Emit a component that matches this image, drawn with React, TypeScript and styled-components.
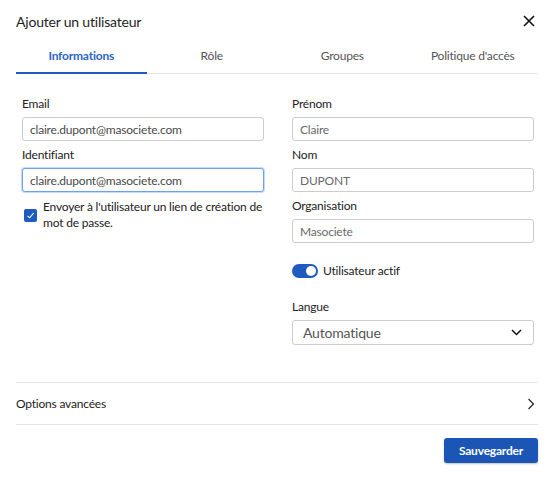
import React, { useState } from "react";
import styled, { createGlobalStyle } from "styled-components";

const GlobalStyle = createGlobalStyle`
  html, body {
    margin: 0;
    padding: 0;
    background: #ffffff;
  }
  body {
    font-family: "Lato", "Noto Sans", sans-serif;
    color: #222222;
    letter-spacing: -0.2px;
  }
  * {
    box-sizing: border-box;
  }
`;

const Dialog = styled.div`
  width: 554px;
  height: 482px;
  display: flex;
  flex-direction: column;
  padding: 0 16px;
  background: #fff;
`;

const Header = styled.div`
  height: 42px;
  display: flex;
  align-items: center;
  justify-content: space-between;
`;

const Title = styled.h1`
  margin: 0;
  font-size: 14px;
  font-weight: 400;
  color: #1e1e1e;
`;

const CloseButton = styled.button`
  border: none;
  background: none;
  padding: 0;
  width: 16px;
  height: 16px;
  display: flex;
  align-items: center;
  justify-content: center;
  cursor: pointer;
  margin-right: 1px;
`;

const TabBar = styled.div`
  display: grid;
  grid-template-columns: repeat(4, 1fr);
  border-bottom: 1px solid #e6e6e6;
  height: 32px;
`;

const Tab = styled.button<{ $active?: boolean }>`
  border: none;
  background: none;
  font-family: inherit;
  letter-spacing: inherit;
  font-size: 12px;
  font-weight: ${(p) => (p.$active ? 700 : 400)};
  color: ${(p) => (p.$active ? "#2c66c4" : "#555555")};
  border-bottom: 2px solid ${(p) => (p.$active ? "#1d5bbf" : "transparent")};
  margin-bottom: -1px;
  padding: 0 0 4px;
  cursor: pointer;
`;

const Body = styled.div`
  display: grid;
  grid-template-columns: 242px 242px;
  column-gap: 28px;
  padding: 22px 4px 0 6px;
  height: 308px;
`;

const Column = styled.div`
  display: flex;
  flex-direction: column;
`;

const Label = styled.label`
  font-size: 12px;
  color: #222;
  line-height: 16px;
  margin-bottom: 5px;
`;

const Input = styled.input<{ $focused?: boolean; $muted?: boolean }>`
  height: 24px;
  width: 100%;
  border: 1px solid ${(p) => (p.$focused ? "#6ea1ec" : "#cccccc")};
  border-radius: 3px;
  box-shadow: ${(p) => (p.$focused ? "0 0 0 1px rgba(90,145,235,0.35)" : "none")};
  font-family: inherit;
  letter-spacing: inherit;
  font-size: 12px;
  color: ${(p) => (p.$muted ? "#6a6a6a" : "#4a4a4a")};
  padding: 0 7px;
  margin-bottom: 6px;
  outline: none;
`;

const CheckRow = styled.label`
  display: flex;
  align-items: center;
  gap: 6px;
  padding-left: 2px;
  margin-top: 1px;
`;

const CheckBox = styled.span`
  width: 13px;
  height: 13px;
  flex: none;
  border-radius: 2px;
  background: #1d5bbf;
  display: flex;
  align-items: center;
  justify-content: center;
`;

const CheckText = styled.span`
  font-size: 12px;
  line-height: 16px;
  color: #222;
`;

const ToggleRow = styled.div`
  display: flex;
  align-items: center;
  gap: 5px;
  margin-top: 14px;
  margin-bottom: 21px;
`;

const Track = styled.span<{ $on: boolean }>`
  width: 26px;
  height: 14px;
  border-radius: 7px;
  background: ${(p) => (p.$on ? "#1d5bbf" : "#bbb")};
  display: flex;
  align-items: center;
  justify-content: ${(p) => (p.$on ? "flex-end" : "flex-start")};
  padding: 2px;
  cursor: pointer;
`;

const Knob = styled.span`
  width: 10px;
  height: 10px;
  border-radius: 50%;
  background: #fff;
`;

const ToggleText = styled.span`
  font-size: 12px;
  color: #222;
`;

const Select = styled.div`
  height: 25px;
  border: 1px solid #cccccc;
  border-radius: 3px;
  display: flex;
  align-items: center;
  justify-content: space-between;
  padding: 0 11px 0 10px;
  font-size: 14px;
  color: #555;
`;

const Accordion = styled.div`
  height: 43px;
  border-top: 1px solid #e6e6e6;
  border-bottom: 1px solid #e6e6e6;
  display: flex;
  align-items: center;
  justify-content: space-between;
  font-size: 12px;
  color: #222;
  padding-right: 3px;
`;

const Footer = styled.div`
  display: flex;
  justify-content: flex-end;
  padding-top: 13px;
`;

const SaveButton = styled.button`
  width: 94px;
  height: 25px;
  border: none;
  border-radius: 3px;
  background: #1b56b6;
  color: #fff;
  font-family: inherit;
  letter-spacing: inherit;
  font-size: 12px;
  font-weight: 700;
  box-shadow: 0 1px 2px rgba(0, 0, 0, 0.25);
  cursor: pointer;
`;

const tabs = ["Informations", "Rôle", "Groupes", "Politique d'accès"];

export default function App() {
  const [active, setActive] = useState(0);
  const [enabled, setEnabled] = useState(true);

  return (
    <>
      <GlobalStyle />
      <Dialog>
        <Header>
          <Title>Ajouter un utilisateur</Title>
          <CloseButton aria-label="Fermer">
            <svg width="12" height="12" viewBox="0 0 12 12">
              <path d="M1 1L11 11M11 1L1 11" stroke="#111" strokeWidth="1.6" />
            </svg>
          </CloseButton>
        </Header>

        <TabBar>
          {tabs.map((t, i) => (
            <Tab key={t} $active={i === active} onClick={() => setActive(i)}>
              {t}
            </Tab>
          ))}
        </TabBar>

        <Body>
          <Column>
            <Label>Email</Label>
            <Input defaultValue="claire.dupont@masociete.com" />
            <Label>Identifiant</Label>
            <Input $focused defaultValue="claire.dupont@masociete.com" />
            <CheckRow>
              <CheckBox>
                <svg width="9" height="9" viewBox="0 0 9 9">
                  <path d="M1.5 4.8L3.6 6.8L7.6 2.2" stroke="#fff" strokeWidth="1.1" fill="none" />
                </svg>
              </CheckBox>
              <CheckText>
                Envoyer à l'utilisateur un lien de création de mot de passe.
              </CheckText>
            </CheckRow>
          </Column>

          <Column>
            <Label>Prénom</Label>
            <Input $muted defaultValue="Claire" />
            <Label>Nom</Label>
            <Input $muted defaultValue="DUPONT" />
            <Label>Organisation</Label>
            <Input $muted defaultValue="Masociete" />
            <ToggleRow>
              <Track $on={enabled} onClick={() => setEnabled(!enabled)}>
                <Knob />
              </Track>
              <ToggleText>Utilisateur actif</ToggleText>
            </ToggleRow>
            <Label>Langue</Label>
            <Select>
              <span>Automatique</span>
              <svg width="11" height="7" viewBox="0 0 11 7">
                <path d="M1 1L5.5 5.5L10 1" stroke="#111" strokeWidth="1.5" fill="none" />
              </svg>
            </Select>
          </Column>
        </Body>

        <Accordion>
          <span>Options avancées</span>
          <svg width="8" height="12" viewBox="0 0 8 12">
            <path d="M1.5 1L6.5 6L1.5 11" stroke="#222" strokeWidth="1.2" fill="none" />
          </svg>
        </Accordion>

        <Footer>
          <SaveButton>Sauvegarder</SaveButton>
        </Footer>
      </Dialog>
    </>
  );
}
